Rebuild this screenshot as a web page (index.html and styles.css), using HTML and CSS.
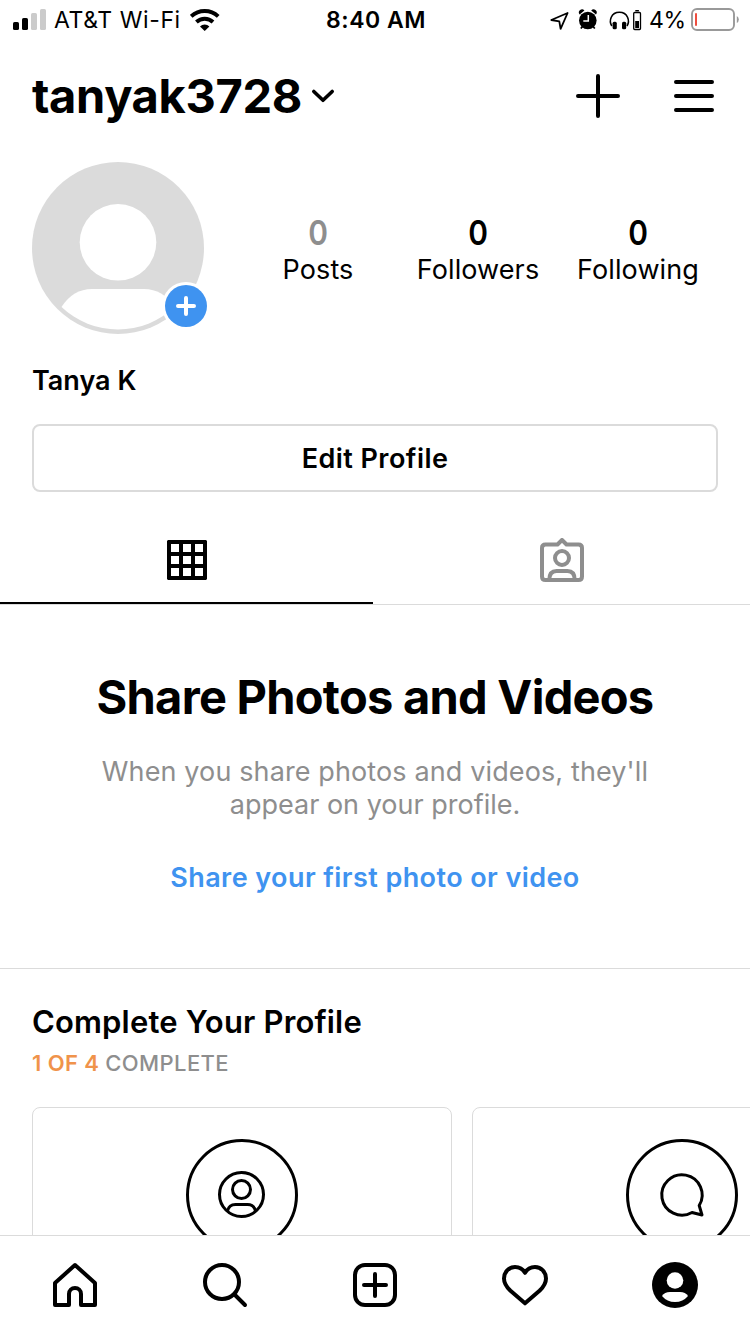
FILE: index.html
```html
<!DOCTYPE html>
<html lang="en">
<head>
<meta charset="utf-8">
<title>tanyak3728</title>
<link rel="stylesheet" href="styles.css">
</head>
<body>
<div class="screen">
  <header class="status">
    <div class="status-left">
      <svg width="34" height="22" viewBox="13 9 34 22"><rect x="13" y="22" width="6" height="8" rx="1.6"/><rect x="22" y="18" width="6" height="12" rx="1.6"/><g fill="#cbcbcb"><rect x="31" y="13" width="6" height="17" rx="1.6"/><rect x="40" y="9" width="6" height="21" rx="1.6"/></g></svg>
      <span class="carrier">AT&amp;T Wi-Fi</span>
      <svg class="wifi" width="30" height="22" viewBox="190 9 30 22"><g fill="none" stroke="#000" stroke-width="3.9"><path d="M191.2 16.4A19.7 19.7 0 0 1 218.2 16.4"/><path d="M196.4 22A12.2 12.2 0 0 1 213 22"/></g><path d="M200 26.4A6.6 6.6 0 0 1 209.4 26.4L204.7 31Z"/></svg>
    </div>
    <span class="time">8:40 AM</span>
    <div class="status-right">
      <svg width="92" height="24" viewBox="550 8 92 24">
        <path d="M551.3 20L567.6 13L560.6 28.8L559.3 21.3Z" fill="none" stroke="#000" stroke-width="1.8" stroke-linejoin="round"/>
        <circle cx="587.8" cy="20.5" r="8.8"/>
        <path d="M579.6 14.4A3 3 0 0 1 584.4 10.6ZM591.2 10.6A3 3 0 0 1 596 14.4Z"/>
        <path d="M583 26L580.8 28.5M592.6 26L594.8 28.5" stroke="#000" stroke-width="1.8"/>
        <path d="M588.3 15V21H583.3" fill="none" stroke="#fff" stroke-width="1.5"/>
        <path d="M611.8 26C608.6 21 611 12.3 619.4 12.3S630.2 21 627 26" fill="none" stroke="#000" stroke-width="1.6"/>
        <rect x="612.6" y="21.7" width="4.2" height="7.5" rx="1.5"/><rect x="622" y="21.7" width="4.2" height="7.5" rx="1.5"/>
        <rect x="633.7" y="12.5" width="6.8" height="17" rx="1" fill="none" stroke="#000" stroke-width="1.3"/>
        <rect x="635.3" y="10" width="3.6" height="1.4"/><rect x="635.2" y="21" width="3.8" height="7"/>
      </svg>
      <span class="percent">4%</span>
      <svg width="48" height="24" viewBox="691 8 48 24"><rect x="692" y="9" width="42" height="21" rx="5" fill="none" stroke="#999" stroke-width="1.9"/><rect x="695" y="13" width="2" height="13" rx="1" fill="#ee4e40"/><path d="M736.8 16Q738.8 17 738.8 19.5T736.8 23Z" fill="#999"/></svg>
    </div>
  </header>

  <div class="header">
    <h1 class="username">tanyak3728</h1>
    <svg class="chevron" width="24" height="16" viewBox="311 88 24 16"><path d="M313.8 91.5L323 100.3L332.2 91.5" fill="none" stroke="#000" stroke-width="3.6" stroke-linecap="round" stroke-linejoin="round"/></svg>
    <svg class="actions" width="138" height="44" viewBox="576 74 138 44"><path d="M578 96H618M598 76V116M676 82H712M676 96H712M676 110H712" stroke="#000" stroke-width="4" stroke-linecap="round"/></svg>
  </div>

  <section class="profile">
    <svg width="176" height="172" viewBox="32 162 176 172">
      <circle cx="118" cy="248" r="86" fill="#dbdbdb"/>
      <circle cx="118" cy="242.3" r="38.3" fill="#fff"/>
      <path d="M61.5 307Q73 289 92 289H144Q163 289 174.5 307A82 82 0 0 1 61.5 307Z" fill="#fff"/>
      <circle cx="186" cy="306" r="24" fill="#fff"/><circle cx="186" cy="306" r="21" fill="#3f93f0"/>
      <path d="M178 306H194M186 298V314" stroke="#fff" stroke-width="4" stroke-linecap="round"/>
    </svg>
    <div class="stats">
      <div class="stat"><b class="muted">0</b><span>Posts</span></div>
      <div class="stat"><b>0</b><span>Followers</span></div>
      <div class="stat"><b>0</b><span>Following</span></div>
    </div>
  </section>
  <div class="name"><span>Tanya K</span></div>
  <button class="edit"><span>Edit Profile</span></button>

  <nav class="tabs">
    <div class="tab active"><svg width="40" height="40" viewBox="0 0 40 40"><path fill-rule="evenodd" d="M1 0H39L40 1V39L39 40H1L0 39V1ZM4 4V12H12V4ZM16 4V12H24V4ZM28 4V12H36V4ZM4 16V24H12V16ZM16 16V24H24V16ZM28 16V24H36V16ZM4 28V36H12V28ZM16 28V36H24V28ZM28 28V36H36V28Z"/></svg></div>
    <div class="tab"><svg width="44" height="44" viewBox="540 538 44 44"><g fill="none" stroke="#8e8e8e" stroke-width="4" stroke-linejoin="round"><path d="M545.5 544.5H557.5L562 540L566.5 544.5H578.5Q582 544.5 582 548V576.5Q582 580 578.5 580H545.5Q542 580 542 576.5V548Q542 544.5 545.5 544.5Z"/><circle cx="562" cy="558" r="7"/><path d="M549.3 580C549.3 574 552 571 556.5 571H567.5C572 571 574.7 574 574.7 580"/></g></svg></div>
  </nav>

  <section class="empty">
    <h2><span>Share Photos and Videos</span></h2>
    <p><span class="lead">When you share photos and videos, they'll</span><br><span>appear on your profile.</span></p>
    <a class="share"><span>Share your first photo or video</span></a>
  </section>

  <section class="complete">
    <h3><span>Complete Your Profile</span></h3>
    <div class="progress"><span class="count">1 OF 4</span> <span class="word">COMPLETE</span></div>
    <div class="cards">
      <div class="card"><svg width="112" height="112" viewBox="186 1139 112 112"><g fill="none" stroke="#000" stroke-width="3"><circle cx="242" cy="1195" r="54.5"/><circle cx="241.5" cy="1194.5" r="22"/><circle cx="241.5" cy="1189.5" r="9"/><path d="M227.5 1211C228.5 1206.5 231.5 1204.5 235.5 1204.5H247.5C251.5 1204.5 254.5 1206.5 255.5 1211"/></g></svg></div>
      <div class="card"><svg width="112" height="112" viewBox="626 1139 112 112"><g fill="none" stroke="#000" stroke-width="3" stroke-linejoin="round"><circle cx="682" cy="1195" r="54.5"/><path d="M699.2 1205.5A20.2 20.2 0 1 0 692 1212.5L702 1215Z"/></g></svg></div>
    </div>
  </section>

  <nav class="bottom">
    <svg viewBox="50 1260 50 50"><path d="M55 1283L75 1265L95 1283V1305H81V1294A6 6 0 0 0 69 1294V1305H55Z" class="line"/></svg>
    <svg viewBox="200 1260 50 50"><circle cx="222" cy="1282" r="17" class="line"/><path d="M234.5 1294.5L245 1305" class="line"/></svg>
    <svg viewBox="350 1260 50 50"><rect x="355" y="1265" width="40" height="40" rx="10" class="line"/><path d="M364 1285H386M375 1274V1296" class="line"/></svg>
    <svg viewBox="500 1260 50 50"><path d="M525 1303.3L510.5 1290.8C506 1286.5 504 1283 504 1278.5C504 1272 508.8 1267 515 1267C519.5 1267 523 1269.3 525 1272.8C527 1269.3 530.5 1267 535 1267C541.2 1267 546 1272 546 1278.5C546 1283 544 1286.5 539.5 1290.8Z" class="line"/></svg>
    <svg viewBox="650 1260 50 50"><circle cx="675" cy="1285" r="23"/><circle cx="675" cy="1280.5" r="8.3" fill="#fff"/><path d="M662 1296Q664.5 1292 670 1292H680Q685.5 1292 688 1296Q683 1302 675 1302T662 1296Z" fill="#fff"/></svg>
  </nav>
</div>
</body>
</html>
```
FILE: styles.css
```css
* { box-sizing: border-box; margin: 0; padding: 0; }
body { background: #fff; color: #000; font-family: Inter, "Liberation Sans", sans-serif; }
svg { display: block; flex: none; }
.screen { width: 750px; height: 1334px; overflow: hidden; display: flex; flex-direction: column; }
.screen > * { flex: none; }
span { white-space: nowrap; }

.status { height: 40px; display: grid; grid-template-columns: 1fr auto 1fr; align-items: center; font-size: 23px; padding: 0 11px 0 13px; }
.status-left, .status-right { display: flex; align-items: center; }
.status-right { justify-content: flex-end; }
.carrier { margin-left: 7px; width: 128px; letter-spacing: 0.6px; }
.wifi { margin-left: 8px; }
.time { font-weight: 600; letter-spacing: 0.5px; }
.percent { margin-left: 7px; width: 42px; letter-spacing: -0.3px; }

.header { height: 112px; display: flex; align-items: center; padding: 0 36px 0 32px; }
.username { font-size: 47px; font-weight: 700; line-height: 56px; width: 279px; letter-spacing: -0.35px; }
.actions { margin-left: auto; }

.profile { height: 182px; padding: 10px 32px 0; display: flex; justify-content: space-between; }
.stats { display: grid; grid-template-columns: repeat(3, 160px); height: 172px; padding-top: 52px; }
.stat { display: flex; flex-direction: column; align-items: center; }
.stat b { font-size: 34px; font-weight: 600; line-height: 37px; height: 38px; transform: scaleX(0.88); }
.stat span { font-size: 27px; line-height: 36px; letter-spacing: 0.1px; }
.muted { color: #8e8e8e; }
.name { height: 90px; padding: 29px 32px 0; font-size: 27px; font-weight: 600; line-height: 36px; }
.edit { margin: 0 32px; height: 68px; background: #fff; border: 2px solid #dbdbdb; border-radius: 8px; font-family: inherit; font-size: 27px; font-weight: 600; letter-spacing: 0.45px; color: #000; }

.tabs { height: 113px; display: grid; grid-template-columns: 373px 377px; border-bottom: 1px solid #dbdbdb; }
.tab { display: flex; justify-content: center; padding-top: 46px; }
.tab.active { padding: 48px 0 0 1px; border-bottom: 2px solid #000; }

.empty { height: 364px; border-bottom: 1px solid #dbdbdb; text-align: center; padding-top: 64px; }
.empty h2 { font-size: 47px; font-weight: 700; line-height: 56px; letter-spacing: -0.74px; }
.empty p { margin-top: 30px; font-size: 27px; line-height: 33px; color: #8e8e8e; }
.lead { letter-spacing: 0.12px; }
.share { display: block; margin-top: 39px; font-size: 27px; line-height: 36px; font-weight: 600; letter-spacing: 0.42px; color: #3f93f0; }

.complete { height: 266px; overflow: hidden; padding: 33px 0 0 32px; }
.complete h3 { font-size: 31px; line-height: 40px; font-weight: 600; letter-spacing: 0.16px; }
.progress { margin-top: 7px; font-size: 22px; line-height: 28px; font-weight: 600; letter-spacing: 0.4px; color: #8e8e8e; }
.word { font-weight: 550; }
.count { color: #f0934b; }
.cards { margin-top: 30px; display: grid; grid-template-columns: 420px 420px; gap: 20px; width: 860px; }
.card { height: 300px; border: 1px solid #dbdbdb; border-radius: 8px; padding-top: 31px; display: flex; justify-content: center; align-items: flex-start; }

.bottom { height: 99px; border-top: 1px solid #dbdbdb; display: grid; grid-template-columns: repeat(5, 150px); justify-items: center; padding-top: 24px; background: #fff; }
.bottom svg { width: 50px; height: 50px; }
.line { fill: none; stroke: #000; stroke-width: 4; stroke-linecap: round; stroke-linejoin: round; }
```
